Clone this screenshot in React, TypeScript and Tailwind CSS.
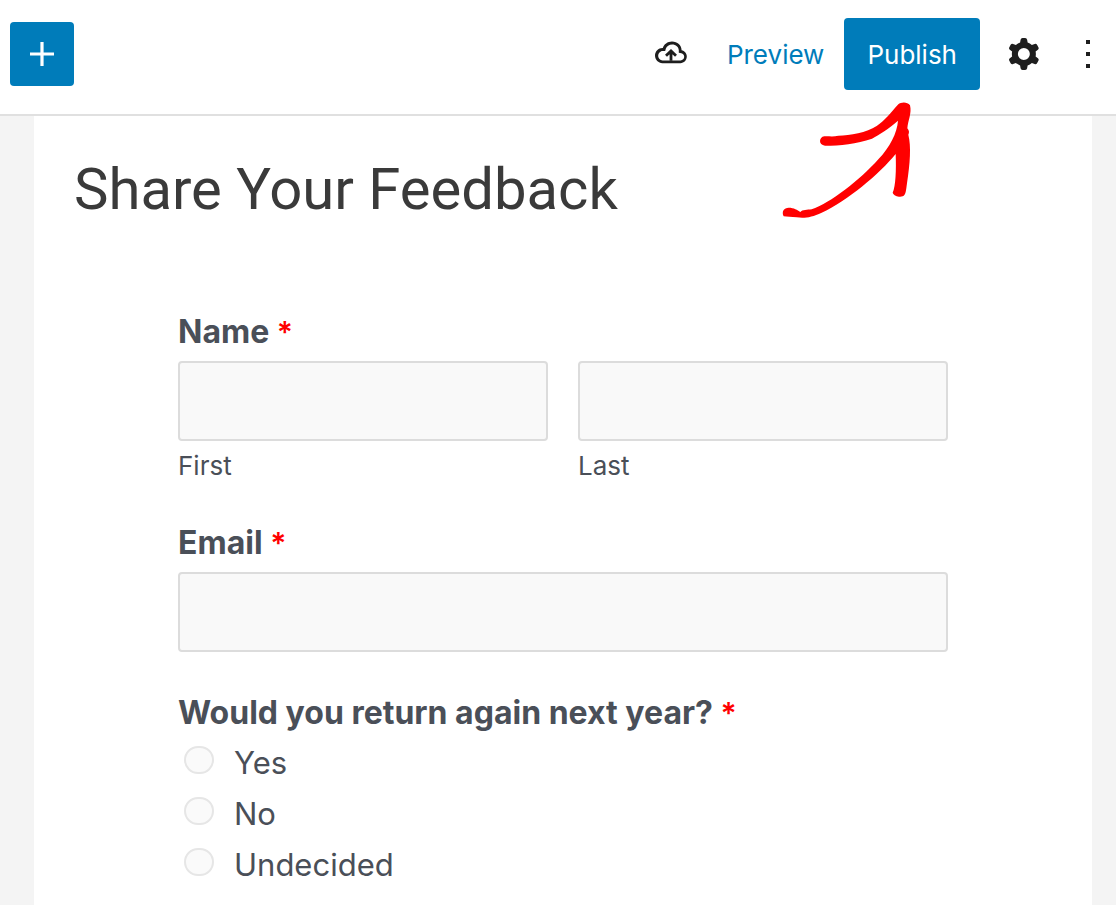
import type { ReactNode } from "react";

const CHOICES = ["Yes", "No", "Undecided"];

const PlusIcon = () => (
  <svg viewBox="0 0 24 24" className="h-12 w-12 fill-current" aria-hidden="true">
    <path d="M18 11.2h-5.2V6h-1.6v5.2H6v1.6h5.2V18h1.6v-5.2H18z" />
  </svg>
);

const CloudIcon = () => (
  <svg viewBox="0 0 24 24" className="h-12 w-12 fill-current" aria-hidden="true">
    <path d="M17.3 10.1c0-2.5-2.1-4.4-4.8-4.4-2.2 0-4.1 1.4-4.6 3.3h-.2C5.7 9 4 10.7 4 12.8c0 2.1 1.7 3.8 3.7 3.8h9c1.8 0 3.2-1.5 3.2-3.3.1-1.6-1.1-2.9-2.6-3.2zm-.5 5.1h-9c-1.2 0-2.2-1.1-2.2-2.3s1-2.4 2.2-2.4h1.3l.3-1.1c.4-1.3 1.7-2.2 3.2-2.2 1.8 0 3.3 1.3 3.3 2.9v1.3l1.3.2c.8.1 1.4.9 1.4 1.8 0 1-.8 1.8-1.8 1.8z" />
    <path d="M12 15.4v-4.3M9.5 12.9 12 10.5l2.5 2.4" className="fill-none stroke-current" strokeWidth="1.4" />
  </svg>
);

const CogIcon = () => (
  <svg viewBox="0 0 24 24" className="h-12 w-12 fill-current" aria-hidden="true">
    <path
      fillRule="evenodd"
      clipRule="evenodd"
      d="M10.289 4.836A1 1 0 0111.275 4h1.306a1 1 0 01.987.836l.244 1.466c.787.26 1.503.679 2.108 1.218l1.393-.522a1 1 0 011.216.437l.653 1.13a1 1 0 01-.23 1.273l-1.148.944a6.025 6.025 0 010 2.435l1.149.946a1 1 0 01.23 1.272l-.653 1.13a1 1 0 01-1.216.437l-1.394-.522c-.605.54-1.32.958-2.108 1.218l-.244 1.466a1 1 0 01-.987.836h-1.306a1 1 0 01-.986-.836l-.244-1.466a5.995 5.995 0 01-2.108-1.218l-1.394.522a1 1 0 01-1.217-.436l-.653-1.131a1 1 0 01.23-1.272l1.149-.946a6.026 6.026 0 010-2.435l-1.148-.944a1 1 0 01-.23-1.272l.653-1.131a1 1 0 011.217-.437l1.393.522a5.994 5.994 0 012.108-1.218l.244-1.466zM14.929 12a3 3 0 11-6 0 3 3 0 016 0z"
    />
  </svg>
);

const MoreIcon = () => (
  <svg viewBox="0 0 24 24" className="h-12 w-12 fill-current" aria-hidden="true">
    <path d="M13 19h-2v-2h2v2zm0-6h-2v-2h2v2zm0-6h-2V5h2v2z" />
  </svg>
);

const HintArrow = () => (
  <svg
    viewBox="0 0 480 420"
    className="pointer-events-none absolute -left-[74px] top-[72px] z-10 h-[140px] w-[160px] fill-[#ff0000]"
    aria-hidden="true"
  >
    <path d="M163 139C175 138 190 141 205 137C240 136 290 128 320 108C345 92 360 70 385 43C392 36 412 34 420 46C426 70 414 90 412 115C418 122 418 128 415 134C424 170 420 220 411 280C408 300 408 316 398 319C388 323 372 318 368 308C377 290 379 240 377 192C330 250 230 335 155 368C125 382 105 385 80 382C65 381 50 380 41 379C34 365 42 353 56 353C72 353 82 360 91 366C97 359 112 360 125 358C180 340 270 270 325 208C360 170 381 130 384 92C355 118 330 132 306 146C260 162 210 167 165 167C145 166 146 141 163 139Z" />
  </svg>
);

const Required = () => <span className="text-[30px] font-semibold leading-none text-[#ff0000]">*</span>;

type TextFieldProps = { id: string; children?: ReactNode };

const TextField = ({ id, children }: TextFieldProps) => (
  <div className="min-w-0 flex-1">
    <input
      id={id}
      type="text"
      className="block h-20 w-full rounded border-2 border-[#dcdcdc] bg-[#f9f9f9] px-4 text-[26px]"
    />
    {children}
  </div>
);

const Header = () => (
  <header className="flex items-center justify-between border-b-2 border-[#e0e0e0] bg-white pb-6 pl-[10px] pr-1 pt-[18px] text-[#1e1e1e]">
    <button
      type="button"
      aria-label="Add block"
      className="flex h-16 w-16 items-center justify-center rounded bg-[#007cba] text-white"
    >
      <PlusIcon />
    </button>
    <div className="flex items-center">
      <button type="button" aria-label="Save draft" className="mr-8">
        <CloudIcon />
      </button>
      <button type="button" className="mr-5 pt-[2px] text-[26px] leading-9 text-[#007cba]">
        Preview
      </button>
      <div className="relative">
        <button
          type="button"
          className="h-[72px] rounded bg-[#007cba] px-[23px] pt-[2px] text-[26px] leading-9 text-white"
        >
          Publish
        </button>
        <HintArrow />
      </div>
      <button type="button" aria-label="Settings" className="ml-5">
        <CogIcon />
      </button>
      <button type="button" aria-label="Options" className="ml-4">
        <MoreIcon />
      </button>
    </div>
  </header>
);

const FeedbackForm = () => (
  <form className="mx-auto max-w-[770px] text-[#4a4f58]">
    <fieldset>
      <legend className="mb-[7px] text-[32px] font-bold leading-11">
        Name <Required />
      </legend>
      <div className="flex gap-[30px]">
        <TextField id="first-name">
          <label htmlFor="first-name" className="mt-[7px] block text-[26px] leading-9">
            First
          </label>
        </TextField>
        <TextField id="last-name">
          <label htmlFor="last-name" className="mt-[7px] block text-[26px] leading-9">
            Last
          </label>
        </TextField>
      </div>
    </fieldset>

    <div className="mt-[37px]">
      <label htmlFor="email" className="mb-[7px] block text-[32px] font-bold leading-11">
        Email <Required />
      </label>
      <TextField id="email" />
    </div>

    <fieldset className="mt-[39px]">
      <legend className="mb-[2px] text-[32px] font-bold leading-11">
        Would you return again next year? <Required />
      </legend>
      {CHOICES.map((choice) => (
        <label key={choice} className="flex h-[51px] items-center pl-[6px] text-[31px] leading-11">
          <input
            type="radio"
            name="return"
            value={choice}
            className="mb-[6px] mr-5 h-7 w-[30px] appearance-none rounded-full border-2 border-[#e6e6e6] bg-[#fafafa] checked:bg-[#007cba]"
          />
          {choice}
        </label>
      ))}
    </fieldset>
  </form>
);

export default function App() {
  return (
    <div className="flex min-h-screen flex-col bg-[#f4f4f4] font-['Inter',sans-serif]">
      <Header />
      <main className="ml-[34px] mr-6 flex-1 bg-white px-10 pt-9">
        <h1 className="mb-[84px] font-['Roboto',sans-serif] text-[58px] leading-[74px] text-[#3a3a3a]">
          Share Your Feedback
        </h1>
        <FeedbackForm />
      </main>
    </div>
  );
}
